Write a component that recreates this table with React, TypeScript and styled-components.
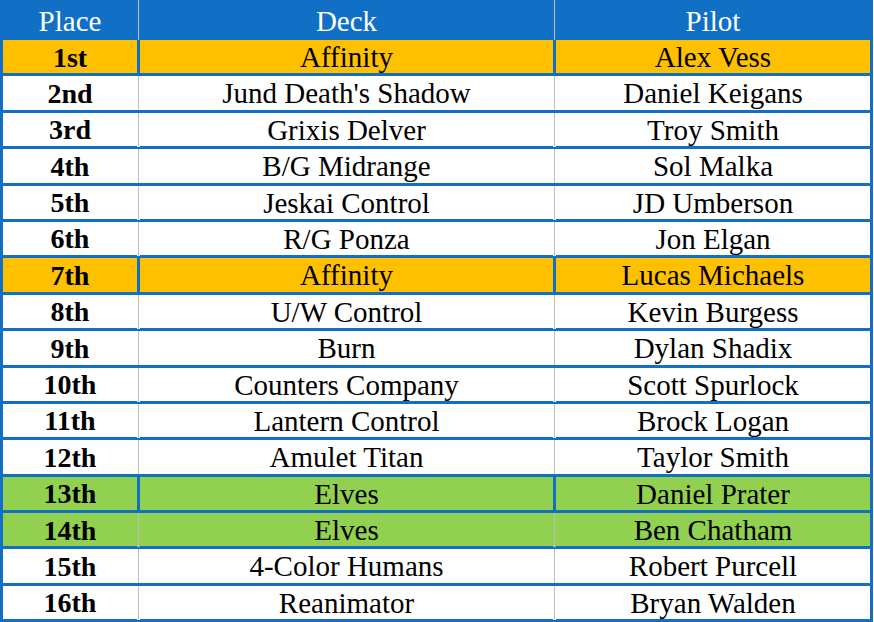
import React from "react";
import styled, { createGlobalStyle, css } from "styled-components";

const BLUE = "#1170c6";

const Global = createGlobalStyle`
  html, body { margin: 0; padding: 0; background: #ffffff; }
  body { font-family: "Liberation Serif", "Times New Roman", serif; }
`;

type Tone = "gold" | "green" | "plain";

const toneBg: Record<Tone, string> = {
  gold: "#ffc000",
  green: "#92d050",
  plain: "#ffffff",
};

const Table = styled.div`
  width: 873px;
  background: ${BLUE};
  padding: 0 3px 3px 3px;
  box-sizing: border-box;
  display: flex;
  flex-direction: column;
`;

const Body = styled.div`
  display: flex;
  flex-direction: column;
  gap: 3px;
`;

const RowGrid = styled.div<{ $bg: string; $height: string }>`
  display: grid;
  grid-template-columns: 134px 3px 413px 3px 314px;
  height: ${(p) => p.$height};
  background: ${(p) => p.$bg};
`;

const Divider = styled.div<{ $solid: boolean; $bg: string }>`
  ${(p) =>
    p.$solid
      ? css`
          background: ${BLUE};
        `
      : css`
          background: linear-gradient(
            to right,
            ${p.$bg} 0 1px,
            #bfbfbf 1px 2px,
            ${p.$bg} 2px 3px
          );
        `}
`;

const Cell = styled.div<{ $bold?: boolean; $head?: boolean }>`
  display: flex;
  align-items: center;
  justify-content: center;
  padding-top: ${(p) => (p.$head ? "2px" : "1px")};
  box-sizing: border-box;
  font-size: ${(p) => (p.$bold ? "28px" : "29px")};
  font-weight: ${(p) => (p.$bold ? 700 : 400)};
  color: ${(p) => (p.$head ? "#ffffff" : "#000000")};
  white-space: nowrap;
`;

type Entry = {
  place: string;
  deck: string;
  pilot: string;
  tone?: Tone;
  blue?: boolean;
};

const rows: Entry[] = [
  { place: "1st", deck: "Affinity", pilot: "Alex Vess", tone: "gold", blue: true },
  { place: "2nd", deck: "Jund Death's Shadow", pilot: "Daniel Keigans" },
  { place: "3rd", deck: "Grixis Delver", pilot: "Troy Smith" },
  { place: "4th", deck: "B/G Midrange", pilot: "Sol Malka" },
  { place: "5th", deck: "Jeskai Control", pilot: "JD Umberson" },
  { place: "6th", deck: "R/G Ponza", pilot: "Jon Elgan" },
  { place: "7th", deck: "Affinity", pilot: "Lucas Michaels", tone: "gold", blue: true },
  { place: "8th", deck: "U/W Control", pilot: "Kevin Burgess" },
  { place: "9th", deck: "Burn", pilot: "Dylan Shadix" },
  { place: "10th", deck: "Counters Company", pilot: "Scott Spurlock" },
  { place: "11th", deck: "Lantern Control", pilot: "Brock Logan" },
  { place: "12th", deck: "Amulet Titan", pilot: "Taylor Smith" },
  { place: "13th", deck: "Elves", pilot: "Daniel Prater", tone: "green", blue: true },
  { place: "14th", deck: "Elves", pilot: "Ben Chatham", tone: "green" },
  { place: "15th", deck: "4-Color Humans", pilot: "Robert Purcell" },
  { place: "16th", deck: "Reanimator", pilot: "Bryan Walden" },
];

export default function App() {
  return (
    <>
      <Global />
      <Table>
        <RowGrid $bg={BLUE} $height="40px">
          <Cell $head>Place</Cell>
          <Divider $solid={false} $bg={BLUE} />
          <Cell $head>Deck</Cell>
          <Divider $solid={false} $bg={BLUE} />
          <Cell $head>Pilot</Cell>
        </RowGrid>
        <Body>
          {rows.map((r) => {
            const bg = toneBg[r.tone ?? "plain"];
            const solid = !!r.blue;
            return (
              <RowGrid key={r.place} $bg={bg} $height="33.4px">
                <Cell $bold>{r.place}</Cell>
                <Divider $solid={solid} $bg={bg} />
                <Cell>{r.deck}</Cell>
                <Divider $solid={solid} $bg={bg} />
                <Cell>{r.pilot}</Cell>
              </RowGrid>
            );
          })}
        </Body>
      </Table>
    </>
  );
}
